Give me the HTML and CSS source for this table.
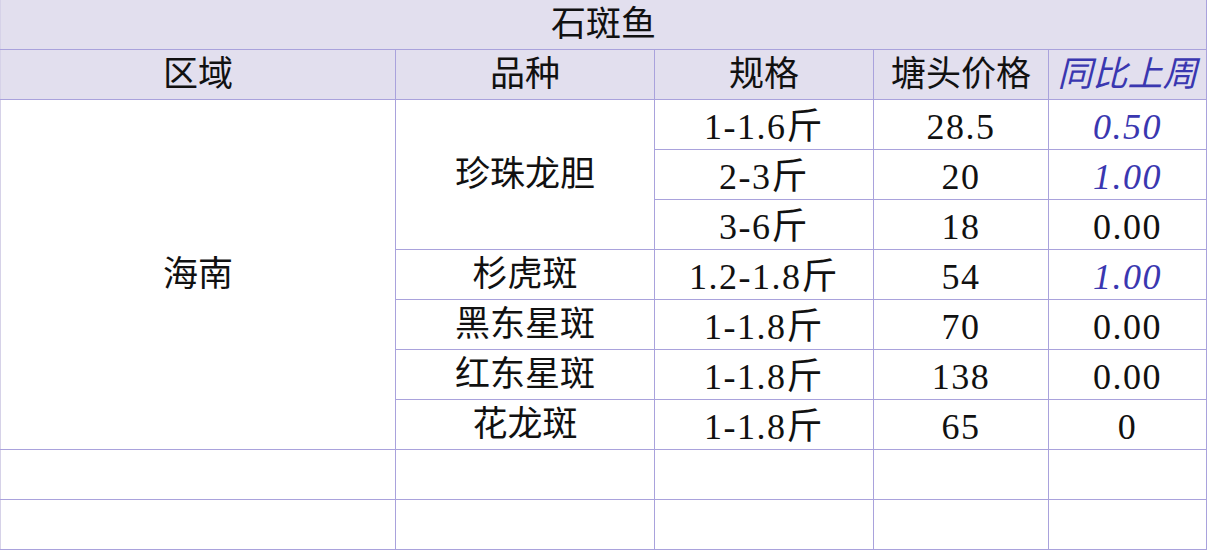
FILE: index.html
```html
<!DOCTYPE html>
<html lang="zh-CN">
<head>
<meta charset="utf-8">
<title>石斑鱼</title>
<link rel="stylesheet" href="styles.css">
</head>
<body>
<table class="sheet">
  <colgroup>
    <col class="c-area"><col class="c-kind"><col class="c-spec"><col class="c-price"><col class="c-cmp">
  </colgroup>
  <tr class="title"><td colspan="5">石斑鱼</td></tr>
  <tr class="head">
    <td>区域</td><td>品种</td><td>规格</td><td>塘头价格</td><td class="blue">同比上周</td>
  </tr>
  <tr>
    <td rowspan="7">海南</td>
    <td rowspan="3">珍珠龙胆</td>
    <td class="num">1-1.6斤</td><td class="num">28.5</td><td class="num blue">0.50</td>
  </tr>
  <tr><td class="num">2-3斤</td><td class="num">20</td><td class="num blue">1.00</td></tr>
  <tr><td class="num">3-6斤</td><td class="num">18</td><td class="num">0.00</td></tr>
  <tr><td>杉虎斑</td><td class="num">1.2-1.8斤</td><td class="num">54</td><td class="num blue">1.00</td></tr>
  <tr><td>黑东星斑</td><td class="num">1-1.8斤</td><td class="num">70</td><td class="num">0.00</td></tr>
  <tr><td>红东星斑</td><td class="num">1-1.8斤</td><td class="num">138</td><td class="num">0.00</td></tr>
  <tr><td>花龙斑</td><td class="num">1-1.8斤</td><td class="num">65</td><td class="num">0</td></tr>
  <tr><td></td><td></td><td></td><td></td><td></td></tr>
  <tr><td></td><td></td><td></td><td></td><td></td></tr>
</table>
</body>
</html>
```
FILE: styles.css
```css
html, body {
  margin: 0;
  padding: 0;
  background: #ffffff;
}
.sheet {
  border-collapse: collapse;
  table-layout: fixed;
  width: 1206px;
  font-family: "Liberation Serif", "Noto Sans CJK SC", serif;
  font-size: 35px;
  color: #111111;
}
.c-area { width: 395px; }
.c-kind { width: 259px; }
.c-spec { width: 219px; }
.c-price { width: 175px; }
.c-cmp { width: 158px; }
.sheet td {
  height: 49px;
  padding: 0;
  text-align: center;
  vertical-align: middle;
  border: 1px solid #a9a2dc;
  line-height: 1;
  white-space: nowrap;
}
.sheet td.num {
  font-size: 36px;
  letter-spacing: 1.5px;
  padding-top: 4px;
  height: 45px;
}
.sheet tr.title td {
  border-top: 0;
  border-left: 1px solid #d6d2e8;
}
.sheet tr.title td,
.sheet tr.head td {
  background: #e2dfee;
}
.sheet td:first-child {
  border-left-color: #d6d2e8;
}
.blue {
  color: #3a37b0;
  font-style: italic;
}
```
